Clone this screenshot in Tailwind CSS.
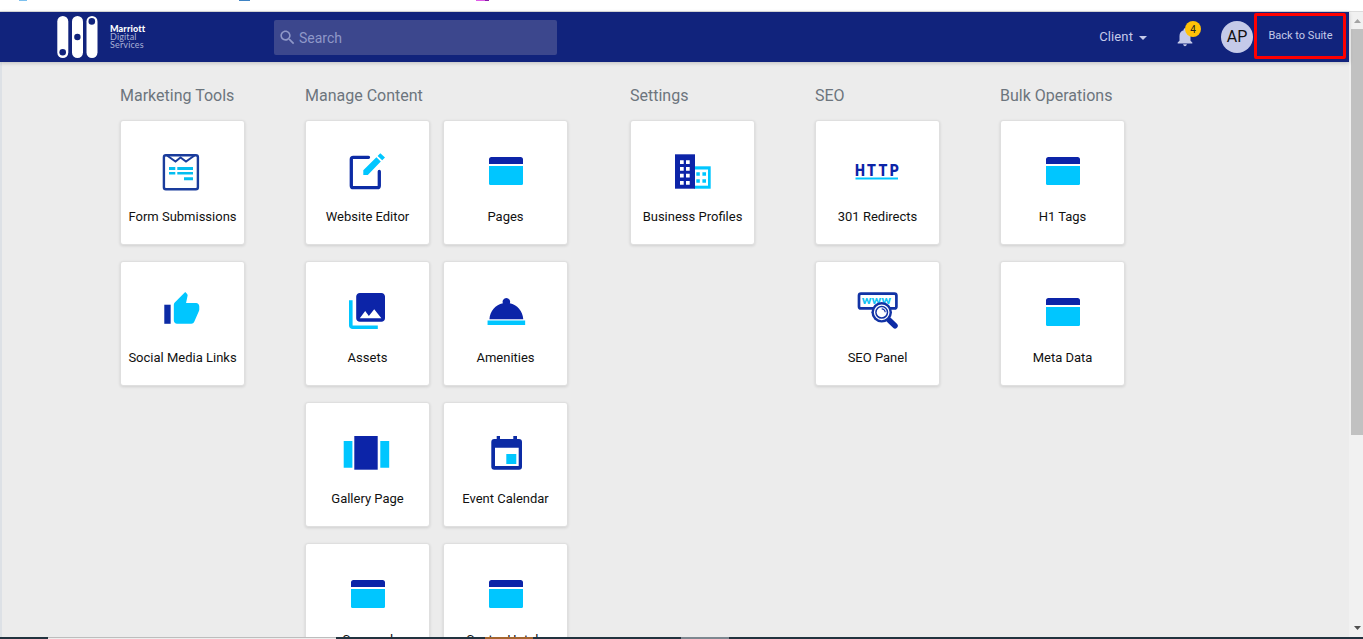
<!DOCTYPE html>
<html lang="en">
<head>
  <meta charset="UTF-8" />
  <title>Marriott Digital Services</title>
  <script src="https://cdn.jsdelivr.net/npm/@tailwindcss/browser@4"></script>
</head>
<body class="h-[639px] overflow-hidden bg-white font-['Roboto',sans-serif]">
  <div class="relative flex h-full flex-col">

    <!-- Browser strip -->
    <div class="flex h-3 shrink-0 items-start border-b border-[#dcdcdc] bg-white">
      <span class="ml-[19px] h-px w-2 bg-[#7cc0ee]"></span>
      <span class="ml-[212px] h-px w-[11px] bg-[#3f83c4]"></span>
      <span class="ml-[226px] h-px w-[9px] bg-[#e05ce8]"></span>
      <span class="h-px w-1 bg-[#8a1aa8]"></span>
    </div>

    <div class="flex min-h-0 flex-1">
      <div class="flex min-w-0 flex-1 flex-col">

        <!-- Header -->
        <header class="z-10 flex h-[50px] shrink-0 items-center bg-[#11237c] shadow-[0_1px_4px_rgba(0,0,0,0.2)]">
          <svg class="ml-[57px] h-[42px] w-[41px] shrink-0" viewBox="0 0 41 42">
            <g fill="#fff">
              <rect x="0.3" width="11" height="42" rx="5.5" />
              <rect x="15" width="11" height="42" rx="5.5" />
              <rect x="29.5" width="11" height="42" rx="5.5" />
            </g>
            <g fill="#11237c">
              <circle cx="5.7" cy="36.3" r="3.3" />
              <circle cx="20.4" cy="21" r="3.2" />
              <circle cx="34.8" cy="5.4" r="3.3" />
            </g>
          </svg>
          <div class="ml-3 w-[164px] font-['Lato',sans-serif] text-[9px] leading-[8px] tracking-[0.15px] text-[#a9b1d6]">
            <div class="font-black text-white">Marriott</div>
            <div>Digital</div>
            <div>Services</div>
          </div>
          <div class="flex h-[35px] w-[283px] items-center rounded-[2px] bg-[#3c478d]">
            <svg class="ml-[4px] size-[19px]" viewBox="0 0 24 24" fill="#8f98c8">
              <path d="M15.5 14h-.79l-.28-.27C15.41 12.59 16 11.11 16 9.5 16 5.91 13.09 3 9.5 3S3 5.91 3 9.5 5.91 16 9.5 16c1.61 0 3.09-.59 4.23-1.57l.27.28v.79l5 4.99L20.49 19l-4.99-5zm-6 0C7.01 14 5 11.99 5 9.5S7.01 5 9.5 5 14 7.01 14 9.5 11.99 14 9.5 14z" />
            </svg>
            <span class="mt-[2px] ml-[2px] text-sm text-[#8f98c8]">Search</span>
          </div>
          <div class="ml-auto flex items-center">
            <span class="text-[13px] tracking-[0.1px] text-[#c5cae9]">Client</span>
            <svg class="ml-[6px] mt-px h-1 w-2" viewBox="0 0 8 4" fill="#c5cae9"><path d="M0 0h8L4 4z" /></svg>
            <div class="relative ml-[27px] h-[22px] w-[22px]">
              <svg class="size-[22px]" viewBox="0 0 24 24" fill="#c5cae9">
                <path d="M12 22c1.1 0 2-.9 2-2h-4c0 1.1.89 2 2 2zm6-6v-5c0-3.07-1.64-5.64-4.5-6.32V4c0-.83-.67-1.5-1.5-1.5s-1.5.67-1.5 1.5v.68C7.63 5.36 6 7.92 6 11v5l-2 2v1h16v-1l-2-2z" />
              </svg>
              <span class="absolute -top-[5px] left-[11px] flex size-4 items-center justify-center rounded-full bg-[#ffc107] text-[10px] text-[#222]">4</span>
            </div>
            <div class="ml-[25px] flex size-8 items-center justify-center rounded-full bg-[#c5cae9] text-base text-[#111]">AP</div>
            <div class="-mt-[2px] mr-[3px] ml-px flex h-[46px] w-[92px] items-center justify-center rounded-[2px] border-3 border-[#ff0000] pt-px pl-px text-[11px] text-[#c5cae9]">Back to Suite</div>
          </div>
        </header>

        <!-- Tool groups -->
        <main id="groups" class="flex min-h-0 flex-1 items-start overflow-hidden border-l-2 border-[#dde1e6] bg-[#ececec] pt-[23px] pl-[118px]"></main>
      </div>

      <!-- Scrollbar -->
      <div class="flex w-[14px] shrink-0 flex-col items-end bg-[#f1f1f1]">
        <svg class="mt-[7px] mr-[2px] h-1 w-[7px]" viewBox="0 0 7 4" fill="#a3a3a3"><path d="M0 4h7L3.5 0z" /></svg>
        <div class="mt-[6px] h-[406px] w-3 bg-[#c1c1c1]"></div>
        <svg class="mt-auto mr-[2px] mb-[9px] h-1 w-[7px]" viewBox="0 0 7 4" fill="#505050"><path d="M0 0h7L3.5 4z" /></svg>
      </div>
    </div>

    <!-- Taskbar edge -->
    <div class="absolute inset-x-0 bottom-0 flex h-[2px] bg-[#22333f]">
      <span class="ml-12 w-72 border-t border-[#bdbdbd] bg-[#eeeeee]"></span>
      <span class="ml-[149px] w-12 bg-[#a5652f]"></span>
      <span class="ml-[148px] w-12 bg-[#7d8890]"></span>
    </div>
  </div>

  <script>
    const icons = {
      form: `<rect x="5.9" y="8.2" width="34" height="34" rx="2" fill="none" stroke="#1a3c9c" stroke-width="2.4"/>
        <path d="M9 8.5l8.5 6 5-4 5.5 4 8.5-6" fill="none" stroke="#1a3c9c" stroke-width="2"/>
        <path d="M11 20h6.3v3H11zM19.3 20H35v3H19.3zM11 25h6.3v2.4H11zM19.3 25H35v2.4H19.3zM26 30.3h9v3h-9z" fill="#04bdf0"/>`,
      editor: `<path d="M25.5 10.3H10.3a2 2 0 0 0-2 2v26.4a2 2 0 0 0 2 2h24a2 2 0 0 0 2-2V24.5" fill="none" stroke="#0c2ba5" stroke-width="3.3" stroke-linecap="round"/>
        <path d="M20.3 23.2L33.4 10.2 37.8 14.5 24.8 28H20.3zM34.6 9L37.3 6.3 42 10.5 39.2 13.3z" fill="#00c6ff"/>`,
      page: `<path d="M8 17v-4.5a2.5 2.5 0 0 1 2.5-2.5h29a2.5 2.5 0 0 1 2.5 2.5V17z" fill="#0c24a8"/>
        <path d="M8 19h34v17.5a1.5 1.5 0 0 1-1.5 1.5h-31A1.5 1.5 0 0 1 8 36.5z" fill="#00c6ff"/>`,
      business: `<path d="M26 19.3h16.7v22.4H26z" fill="#00c6ff"/><path d="M27 22.5h13v16.2H27z" fill="#fff"/>
        <path d="M28.3 25.2h3.5v3.6h-3.5zM34.4 25.2H38v3.6h-3.6zM28.3 32.2h3.5v3.5h-3.5zM34.4 32.2H38v3.5h-3.6z" fill="#00c6ff"/>
        <path d="M7 7.3h20v34.4H7z" fill="#0c24a8"/>
        <path d="M12 13.3h3.7V17H12zM18 13.3h3.7V17H18zM12 20h3.7v3.7H12zM18 20h3.7v3.7H18zM12 26.7h3.7v3.7H12zM18 26.7h3.7v3.7H18zM12 34h3.7v3.7H12zM18 34h3.7v3.7H18z" fill="#fff"/>`,
      http: `<text transform="translate(2 29.4) scale(.88 1)" font-family="Roboto" font-size="16" font-weight="900" textLength="50" fill="#0c24a8">HTTP</text>
        <path d="M2.5 30.6h42.5v1.8H2.5z" fill="#00c6ff"/>`,
      thumb: `<g transform="translate(4.7 2.4) scale(1.59)"><path d="M1 21h4V9H1v12z" fill="#0c2ba5"/>
        <path d="M23 10c0-1.1-.9-2-2-2h-6.31l.95-4.57.03-.32c0-.41-.17-.79-.44-1.06L14.17 1 7.59 7.59C7.22 7.95 7 8.45 7 9v10c0 1.1.9 2 2 2h9c.83 0 1.54-.5 1.84-1.22l3.02-7.05c.09-.23.14-.47.14-.73v-2z" fill="#00c6ff"/></g>`,
      assets: `<g transform="translate(2.4 1.4) scale(1.8)"><path d="M22 16V4c0-1.1-.9-2-2-2H8c-1.1 0-2 .9-2 2v12c0 1.1.9 2 2 2h12c1.1 0 2-.9 2-2zm-11-4l2.03 2.71L16 11l4 5H8l3-4z" fill="#0c24a8"/>
        <path d="M2 6v14c0 1.1.9 2 2 2h14v-2H4V6H2z" fill="#00c6ff"/></g>`,
      amenities: `<g transform="translate(2.8 .6) scale(1.88)"><path d="M2 17h20v2.4H2z" fill="#00c6ff"/>
        <path d="M13.84 7.79A2.006 2.006 0 0 0 12 5a2.006 2.006 0 0 0-1.84 2.79C6.25 8.6 3.27 11.93 3 16.3h18c-.27-4.37-3.25-7.7-7.16-8.51z" fill="#0c24a8"/></g>`,
      seo: `<rect x="6" y="5.6" width="37.4" height="14.8" rx="2" fill="#fff" stroke="#1233a5" stroke-width="2.7"/>
        <text x="8.7" y="16" font-family="Roboto" font-size="11.5" font-weight="700" textLength="29.5" lengthAdjust="spacingAndGlyphs" fill="#12c4f5">www</text>
        <path d="M35.5 31.5l6.5 6.3" stroke="#0c2ba5" stroke-width="5.5" stroke-linecap="round"/>
        <circle cx="28.7" cy="24.3" r="10.3" fill="#1233a5"/><circle cx="28.7" cy="24.3" r="7.2" fill="#1233a5" stroke="#fff" stroke-width="1.3"/>
        <circle cx="28.7" cy="24.3" r="5" fill="#fff"/><path d="M28.7 20.8a3.5 3.5 0 0 1 3.5 3.5" fill="none" stroke="#1233a5" stroke-width="1.2"/>`,
      gallery: `<path d="M11.3 7h23.4v33.7H11.3z" fill="#0c24a8"/><path d="M.7 12h8.7v26.7H.7zM37.3 12h8.9v26.7h-8.9z" fill="#00c6ff"/>`,
      calendar: `<path d="M15.7 7H19v3h13.3V7H36v3h2a3 3 0 0 1 3 3v24.7a3 3 0 0 1-3 3H13.3a3 3 0 0 1-3-3V13a3 3 0 0 1 3-3h2.4zM14 18.7V37h23.7V18.7z" fill="#0c2ba5"/>
        <path d="M25.3 25h10v10h-10z" fill="#00c6ff"/>`
    };

    const groups = [
      { title: "Marketing Tools", cols: 1, items: [["form", "Form Submissions"], ["thumb", "Social Media Links"]] },
      { title: "Manage Content", cols: 2, items: [
        ["editor", "Website Editor"], ["page", "Pages"],
        ["assets", "Assets"], ["amenities", "Amenities"],
        ["gallery", "Gallery Page"], ["calendar", "Event Calendar"],
        ["page", "Carousel"], ["page", "Center Hotels"]
      ] },
      { title: "Settings", cols: 1, items: [["business", "Business Profiles"]] },
      { title: "SEO", cols: 1, items: [["http", "301 Redirects"], ["seo", "SEO Panel"]] },
      { title: "Bulk Operations", cols: 1, items: [["page", "H1 Tags"], ["page", "Meta Data"]] }
    ];

    const card = ([icon, label]) => `
      <a class="flex h-[125px] w-[125px] flex-col items-center rounded-[3px] border border-[#dfdfdf] bg-white pt-[26px] shadow-[0_1px_3px_rgba(0,0,0,0.12)]">
        <svg class="mr-px size-12 shrink-0" viewBox="0 0 48 48">${icons[icon]}</svg>
        <span class="mt-[12px] text-[13px] leading-5 whitespace-nowrap text-[#111]">${label}</span>
      </a>`;

    document.getElementById("groups").innerHTML = groups.map(g => `
      <section class="${g.cols === 2 ? "w-[325px]" : "w-[185px]"} shrink-0">
        <h2 class="mb-[13px] h-[22px] text-base leading-[22px] text-[#6c757d]">${g.title}</h2>
        <div class="grid ${g.cols === 2 ? "grid-cols-[125px_125px]" : "grid-cols-[125px]"} gap-x-[13px] gap-y-4">${g.items.map(card).join("")}</div>
      </section>`).join("");
  </script>
</body>
</html>
